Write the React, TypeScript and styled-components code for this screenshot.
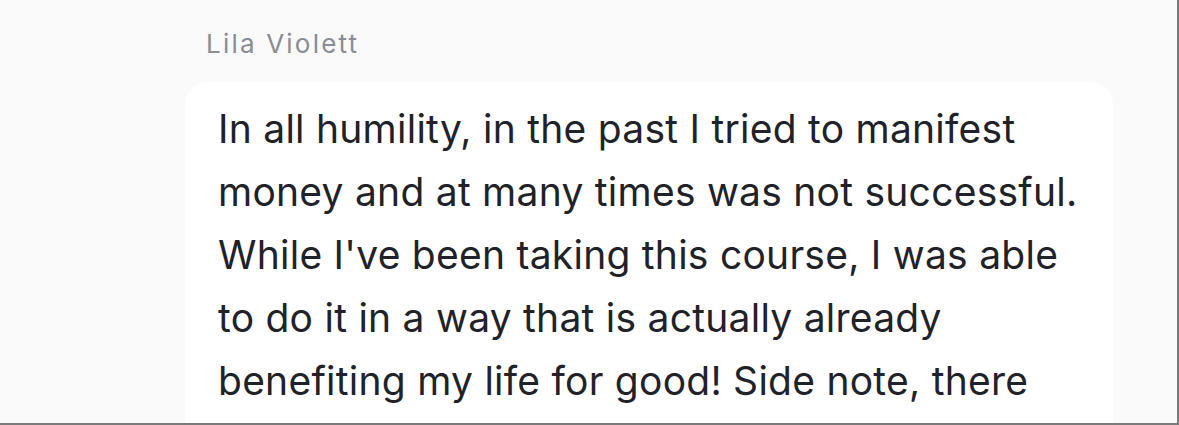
import React from "react";
import styled, { createGlobalStyle } from "styled-components";

const GlobalStyle = createGlobalStyle`
  html, body {
    margin: 0;
    padding: 0;
    background: #fafafa;
  }
  * {
    box-sizing: border-box;
  }
`;

const Page = styled.div`
  width: 1179px;
  height: 425px;
  overflow: hidden;
  background: #fafafa;
  border-right: 2px solid #7b7b7b;
  border-bottom: 2px solid #7b7b7b;
  padding: 27px 0 0 185px;
  font-family: "Inter", "Noto Sans", sans-serif;
`;

const Author = styled.div`
  color: #898d95;
  font-size: 26px;
  line-height: 34px;
  letter-spacing: 2.2px;
  padding-left: 21px;
  margin-bottom: 21px;
`;

const Bubble = styled.div`
  width: 928px;
  background: #ffffff;
  border-radius: 22px;
  padding: 15px 32px 40px 33px;
`;

const Message = styled.p`
  margin: 0;
  color: #1f2228;
  font-size: 39px;
  line-height: 63px;
  letter-spacing: 0.25px;
`;

const App = () => {
  return (
    <>
      <GlobalStyle />
      <Page>
        <Author>Lila Violett</Author>
        <Bubble>
          <Message>
            In all humility, in the past I tried to manifest money and at many
            times was not successful. While I've been taking this course, I was
            able to do it in a way that is actually already benefiting my life
            for good! Side note, there
          </Message>
        </Bubble>
      </Page>
    </>
  );
};

export default App;
